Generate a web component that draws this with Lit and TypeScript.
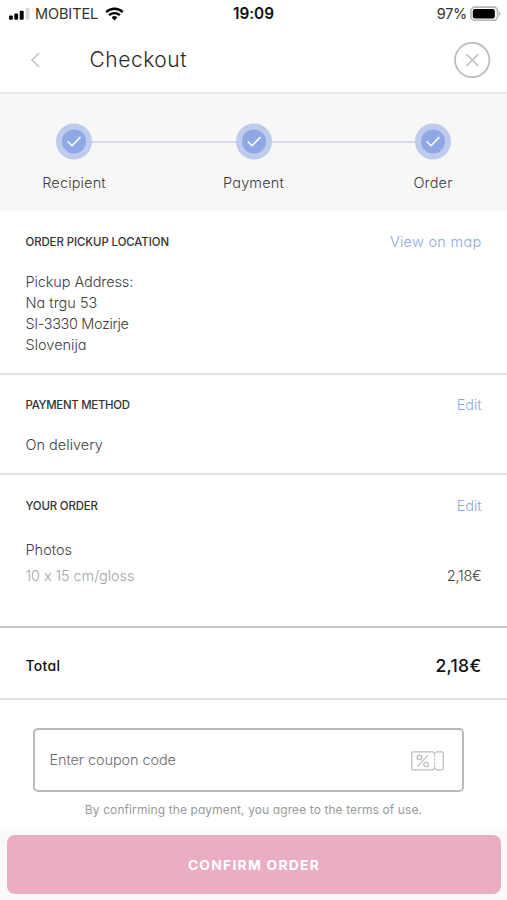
import { LitElement, html, css, svg } from "lit";

const base = css`
  * { box-sizing: border-box; }
  svg { display: block; flex: none; }
`;

class StatusBar extends LitElement {
  static styles = [base, css`
    :host { display: grid; grid-template-columns: 1fr auto 1fr; align-items: center; height: 27px; padding: 0 6px 0 9px; color: #333; font-size: 15px; }
    .side { display: flex; align-items: center; }
    .right { justify-content: flex-end; }
    .carrier { margin: 0 7px 0 5px; font-size: 14.5px; letter-spacing: -0.1px; }
    .time { margin-right: 3px; font-weight: 600; font-size: 15.3px; letter-spacing: -0.05px; color: #111; }
    .pct { margin-right: 3px; font-size: 14.5px; letter-spacing: -0.3px; }
  `];
  render() {
    return html`
      <div class="side">
        <svg width="21" height="12" viewBox="0 0 21 12">
          <rect x="0" y="7.5" width="3.8" height="4.3" rx="1" fill="#000"/>
          <rect x="5.3" y="5.4" width="3.8" height="6.4" rx="1" fill="#000"/>
          <rect x="10.7" y="2.8" width="4" height="9" rx="1" fill="#000"/>
          <rect x="16.6" y="0" width="4" height="11.8" rx="1" fill="#d9d9d9"/>
        </svg>
        <span class="carrier">MOBITEL</span>
        <svg width="19" height="14" viewBox="0 0 19 14">
          <g fill="none" stroke="#000" stroke-width="2.3">
            <path d="M1.2 5.1A12 12 0 0 1 17.8 5.1"/>
            <path d="M4.1 8.2A7.8 7.8 0 0 1 14.9 8.2"/>
          </g>
          <path d="M6.6 10.5A4.2 4.2 0 0 1 12.4 10.5L9.5 13.5Z" fill="#000"/>
        </svg>
      </div>
      <span class="time">19:09</span>
      <div class="side right">
        <span class="pct">97%</span>
        <svg width="31" height="16" viewBox="0 0 31 16">
          <rect x="1" y="1.1" width="26.5" height="13.2" rx="3.8" fill="#fff" stroke="#b5b5b5" stroke-width="1.6"/>
          <rect x="2.8" y="2.9" width="22" height="9.6" rx="2" fill="#000"/>
          <path d="M28.8 5.4Q30.6 6 30.6 7.7T28.8 10Z" fill="#b5b5b5"/>
        </svg>
      </div>`;
  }
}
customElements.define("status-bar", StatusBar);

class StepBar extends LitElement {
  static styles = [base, css`
    :host { display: block; height: 117px; padding-top: 28.5px; background: #f7f7f7; }
    .track { display: flex; align-items: center; padding: 0 56px; }
    .line { flex: 1; height: 2px; background: #d5d9f0; }
    .labels { display: flex; justify-content: space-between; padding: 0 24px; margin-top: 12.5px; }
    .label { width: 100px; text-align: center; font-size: 14.5px; line-height: 20px; letter-spacing: 0.15px; font-weight: 350; color: #3c3c3c; }
  `];
  private dot() {
    return svg`<svg width="36" height="38" viewBox="0 0 36 38">
      <circle cx="18" cy="18.5" r="18" fill="#becbed"/>
      <circle cx="18" cy="18.5" r="12" fill="#8ea7e5"/>
      <path d="M11.7 18.5L16 22.7L24.4 14.1" fill="none" stroke="#fff" stroke-width="1.6"/>
    </svg>`;
  }
  render() {
    return html`
      <div class="track">${this.dot()}<div class="line"></div>${this.dot()}<div class="line"></div>${this.dot()}</div>
      <div class="labels">
        <span class="label">Recipient</span><span class="label">Payment</span><span class="label">Order</span>
      </div>`;
  }
}
customElements.define("step-bar", StepBar);

class AppRoot extends LitElement {
  static styles = [base, css`
    :host { display: flex; flex-direction: column; height: 900px; background: #fff; overflow: hidden; font-family: Inter, sans-serif; font-feature-settings: "cv11" 1, "calt" 0; white-space: nowrap; color: #404040; }
    .nav { display: flex; align-items: center; height: 67px; border-bottom: 2px solid #e9e9e9; padding: 0 16px 0 30px; }
    .title { flex: 1; margin: 0 0 0 48.5px; font-size: 21px; font-weight: 300; letter-spacing: 0.53px; color: #2b2b2b; line-height: 30px; }
    .close { margin-top: 1px; }
    .block { padding: 0 25.5px; border-bottom: 2px solid #e0e0e0; }
    .pickup { height: 164px; padding-top: 20px; }
    .payment { height: 100px; padding-top: 19px; }
    .order { height: 153px; padding-top: 20px; border-color: #c6c6c6; }
    .total { height: 71.5px; display: flex; align-items: center; justify-content: space-between; padding-top: 5.5px; color: #111; }
    .head { display: flex; justify-content: space-between; align-items: center; height: 21px; }
    .name { font-size: 11.4px; font-weight: 500; color: #333; }
    .n1 { letter-spacing: -0.07px; }
    .n2 { letter-spacing: -0.28px; }
    .n3 { letter-spacing: -0.15px; }
    .link { font-size: 14.5px; font-weight: 350; color: #8ea9e6; letter-spacing: 0.28px; }
    .edit { letter-spacing: -0.1px; }
    .text { font-size: 14.5px; font-weight: 300; line-height: 20.9px; }
    .after { margin-top: 20.4px; }
    .zip { letter-spacing: -0.37px; }
    .address { letter-spacing: -0.1px; }
    .row { display: flex; justify-content: space-between; margin-top: 5.2px; letter-spacing: -0.27px; }
    .product { margin-top: 24px; }
    .muted { color: #a5a5a5; letter-spacing: -0.1px; }
    .sum-name { font-size: 14px; font-weight: 500; letter-spacing: 0.3px; margin-bottom: 1px; }
    .sum { font-size: 17.5px; font-weight: 500; letter-spacing: 0.3px; }
    .coupon { display: flex; align-items: center; justify-content: space-between; width: 431px; height: 64px; margin: 28.5px 0 0 32.5px; padding: 0 17.5px 0 15px; border: 2px solid #b9b9b9; border-radius: 5px; }
    .ticket { margin-top: 1px; }
    .hint { font-size: 14.5px; font-weight: 300; letter-spacing: -0.1px; margin-bottom: 1px; color: #6d6d6d; }
    .terms { margin-top: 8.5px; text-align: center; font-size: 12px; line-height: 18px; letter-spacing: 0.1px; color: #9a9a9a; }
    .footer { flex: 1; margin-top: 9px; padding: 7px 6px 0 7px; background: #fafafa; }
    .confirm { display: block; width: 100%; height: 59px; border: 0; border-radius: 8px; background: #ebadc4; color: #fff; font: 650 13.8px Inter, sans-serif; letter-spacing: 1.28px; padding: 2px 0 0; }
  `];
  render() {
    return html`
      <status-bar></status-bar>
      <header class="nav">
        <svg width="11" height="16" viewBox="0 0 11 16"><path d="M9.2 1L1.8 8L9.2 15" fill="none" stroke="#bdbdbd" stroke-width="1.4"/></svg>
        <h1 class="title">Checkout</h1>
        <svg class="close" width="37" height="37" viewBox="0 0 37 37"><g fill="none" stroke="#bdbdbd"><circle cx="18.2" cy="18" r="17.2" stroke-width="1.7"/><path d="M12.2 12L24.4 24.2M24.4 12L12.2 24.2" stroke-width="1.5"/></g></svg>
      </header>
      <step-bar></step-bar>
      <section class="block pickup">
        <div class="head"><span class="name n1">ORDER PICKUP LOCATION</span><span class="link">View on map</span></div>
        <div class="text after">
          <div class="address">Pickup Address:</div>
          <div>Na trgu 53</div>
          <div class="zip">SI-3330 Mozirje</div>
          <div>Slovenija</div>
        </div>
      </section>
      <section class="block payment">
        <div class="head"><span class="name n2">PAYMENT METHOD</span><span class="link edit">Edit</span></div>
        <div class="text after">On delivery</div>
      </section>
      <section class="block order">
        <div class="head"><span class="name n3">YOUR ORDER</span><span class="link edit">Edit</span></div>
        <div class="text product">Photos</div>
        <div class="text row"><span class="muted">10 x 15 cm/gloss</span><span>2,18€</span></div>
      </section>
      <section class="block total"><span class="sum-name">Total</span><span class="sum">2,18€</span></section>
      <div class="coupon">
        <span class="hint">Enter coupon code</span>
        <svg class="ticket" width="33" height="20" viewBox="0 0 33 20">
          <g fill="none" stroke="#bcbcbc" stroke-width="1.2">
            <path d="M1.6 .8H21.8L23.6 2.8L25.4 .8H31.2Q32.2 .8 32.2 1.8V17.8Q32.2 18.8 31.2 18.8H25.4L23.6 16.8L21.8 18.8H1.6Q.8 18.8 .8 17.8V1.8Q.8 .8 1.6 .8Z"/>
            <path d="M23.6 4V16.5" stroke-dasharray="2 1.4"/>
            <circle cx="8.4" cy="6.4" r="2.3"/><circle cx="15.1" cy="13.4" r="2.3"/>
            <path d="M16.8 4.4L6.4 15.6"/>
          </g>
        </svg>
      </div>
      <div class="terms">By confirming the payment, you agree to the terms of use.</div>
      <footer class="footer"><button class="confirm">CONFIRM ORDER</button></footer>`;
  }
}
customElements.define("app-root", AppRoot);
